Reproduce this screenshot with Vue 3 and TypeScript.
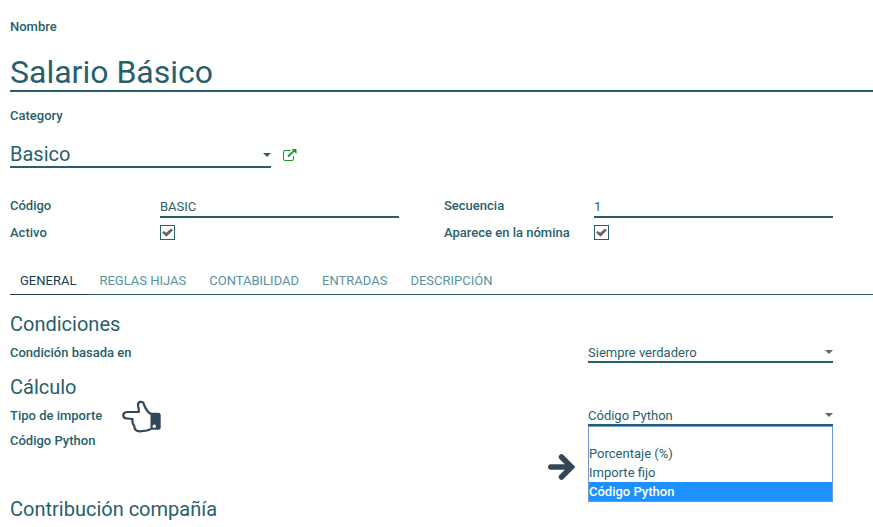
<script setup lang="ts">
import { ref } from 'vue'

const nombre = ref('Salario Básico')
const categoria = ref('Basico')
const codigo = ref('BASIC')
const secuencia = ref('1')
const activo = ref(true)
const apareceNomina = ref(true)
const condicion = ref('Siempre verdadero')
const tipoImporte = ref('Código Python')
const activeTab = ref('General')

const tabs: string[] = ['General', 'Reglas Hijas', 'Contabilidad', 'Entradas', 'Descripción']
const tipos: string[] = ['', 'Porcentaje (%)', 'Importe fijo', 'Código Python']
</script>

<template>
  <form class="sheet" @submit.prevent>
    <label class="label" for="nombre">Nombre</label>
    <input id="nombre" v-model="nombre" class="field title" type="text" />

    <label class="label" for="categoria">Category</label>
    <div class="category">
      <div class="picker category-picker">
        <select id="categoria" v-model="categoria" class="field">
          <option>Basico</option>
        </select>
      </div>
      <button class="open" type="button" aria-label="Abrir">
        <svg width="14" height="12" viewBox="0 0 14 12" fill="none" stroke="currentColor">
          <path d="M7.500 1.500H2Q0.500 1.500 0.500 3V10Q0.500 11.500 2 11.500H9Q10.500 11.500 10.500 10V7" />
          <path d="M5 7.500L11 1.800" stroke-width="1.800" />
          <path d="M8.500 0H13.500V5Z" fill="currentColor" stroke="none" />
        </svg>
      </button>
    </div>

    <div class="groups">
      <div class="group">
        <label class="label" for="codigo">Código</label>
        <input id="codigo" v-model="codigo" class="field" type="text" />
        <label class="label" for="activo">Activo</label>
        <input id="activo" v-model="activo" class="check" type="checkbox" />
      </div>
      <div class="group">
        <label class="label" for="secuencia">Secuencia</label>
        <input id="secuencia" v-model="secuencia" class="field" type="text" />
        <label class="label" for="nomina">Aparece en la nómina</label>
        <input id="nomina" v-model="apareceNomina" class="check" type="checkbox" />
      </div>
    </div>

    <div class="tabs" role="tablist">
      <button
        v-for="tab in tabs"
        :key="tab"
        type="button"
        role="tab"
        class="tab"
        :class="{ active: tab === activeTab }"
        :aria-selected="tab === activeTab"
        @click="activeTab = tab"
      >{{ tab }}</button>
    </div>

    <section class="section">
      <h2>Condiciones</h2>
      <div class="row">
        <label class="label" for="condicion">Condición basada en</label>
        <div class="picker gray">
          <select id="condicion" v-model="condicion" class="field">
            <option>Siempre verdadero</option>
          </select>
        </div>
      </div>
    </section>

    <section class="section calc">
      <h2>Cálculo</h2>
      <div class="row">
        <div class="pointed">
          <label class="label" for="tipo">Tipo de importe</label>
          <svg class="hand" width="40" height="34" viewBox="0 0 40 34" aria-hidden="true">
            <path
              d="M29 14C26 12.500 24 9.500 22.500 6L21.800 3.800C21 1 16.200 1 16 4.500C16 7 17 8.500 16.800 12H5C0 12.300 0 18.300 5 18.500L10.500 19C10 22.500 11 24.500 12.300 26C12.300 29.500 14.500 31.300 18 31.300L25 30.500L29 29"
              fill="#fff"
              stroke="currentColor"
              stroke-width="2.200"
              stroke-linejoin="round"
            />
            <path
              d="M28.500 12.700H36.500Q38.700 12.700 38.700 15V27.500Q38.700 29.800 36.500 29.800H28.500Z"
              fill="currentColor"
            />
            <circle cx="32.300" cy="26.300" r="1.700" fill="#fff" />
          </svg>
        </div>
        <div class="picker gray">
          <select id="tipo" v-model="tipoImporte" class="field">
            <option v-for="tipo in tipos" :key="tipo">{{ tipo }}</option>
          </select>
          <ul class="menu" role="listbox" aria-label="Tipo de importe">
            <li
              v-for="tipo in tipos"
              :key="tipo"
              role="option"
              :aria-selected="tipo === tipoImporte"
              :class="{ selected: tipo === tipoImporte }"
              @click="tipoImporte = tipo"
            >{{ tipo }}</li>
          </ul>
          <svg class="arrow" width="28" height="28" viewBox="0 0 28 28" aria-hidden="true">
            <path
              d="M2.800 14H23M13.500 4L23.500 14L13.500 24"
              fill="none"
              stroke="currentColor"
              stroke-width="5.500"
              stroke-linecap="round"
            />
          </svg>
        </div>
      </div>
      <span class="label">Código Python</span>
    </section>

    <section class="section">
      <h2>Contribución compañía</h2>
    </section>
  </form>
</template>

<style>
body {
  margin: 0;
  background: #fff;
}
</style>

<style scoped>
.sheet {
  --ink: #285f6b;
  --mark: #33475b;
  padding: 17px 0 0 10px;
  color: var(--ink);
  font: 13px/20px Roboto, sans-serif;
}

.label {
  display: block;
  font-weight: 500;
  line-height: 20px;
}

.field {
  display: block;
  box-sizing: border-box;
  width: 100%;
  height: 22px;
  padding: 0;
  border: 0;
  border-bottom: 2px solid var(--ink);
  border-radius: 0;
  outline: 0;
  background: transparent;
  color: inherit;
  font: inherit;
  appearance: none;
}

.title {
  height: 38px;
  margin: 17px 0 14px;
  font-size: 32px;
}

.category {
  display: flex;
  align-items: center;
  gap: 12px;
  margin-top: 16px;
}

.category-picker {
  width: 261px;
  font-size: 20px;
}

.category-picker .field {
  height: 26px;
}

.picker {
  position: relative;
}

.picker::after {
  content: '';
  position: absolute;
  top: 7px;
  right: 0;
  border: 4px solid transparent;
  border-top-color: var(--ink);
  border-bottom: 0;
  pointer-events: none;
}

.category-picker::after {
  top: 11px;
}

.gray::after {
  border-top-color: #666;
}

.open {
  display: flex;
  padding: 0;
  border: 0;
  background: none;
  color: #159a26;
}

.groups {
  display: grid;
  grid-template-columns: 1fr 1fr;
  gap: 45px;
  margin: 28px 40px 0 0;
}

.group {
  display: grid;
  grid-template-columns: 150px 1fr;
  grid-template-rows: 22px 20px;
  row-gap: 5px;
}

.check {
  display: grid;
  place-items: center;
  box-sizing: border-box;
  width: 15px;
  height: 15px;
  margin: 2px 0 0;
  border: 1px solid var(--ink);
  appearance: none;
}

.check:checked::before {
  content: '';
  width: 11px;
  height: 9px;
  background: #666;
  clip-path: polygon(0 50%, 16% 32%, 38% 54%, 82% 6%, 100% 24%, 40% 96%);
}

.tabs {
  display: flex;
  margin-top: 23px;
  border-bottom: 1px solid var(--ink);
}

.tab {
  height: 29px;
  margin-bottom: -1px;
  padding: 2px 13px 0 10px;
  border: 0;
  border-bottom: 1px solid transparent;
  background: none;
  color: #5a929d;
  font: inherit;
  text-transform: uppercase;
}

.tab.active {
  border-bottom-color: #1b3a4b;
  color: #1b3a4b;
}

.section {
  margin-top: 16px;
}

.section + .section {
  margin-top: 11px;
}

h2 {
  margin: 0;
  font-size: 20px;
  font-weight: 400;
  line-height: 26px;
}

.row {
  display: grid;
  grid-template-columns: 1fr 245px;
  margin: 6px 40px 0 0;
}

.row .field {
  height: 20px;
}

.calc {
  min-height: 111px;
}

.calc .row {
  margin-bottom: 5px;
}

.pointed {
  position: relative;
  justify-self: start;
}

.hand {
  position: absolute;
  top: -6px;
  left: calc(100% + 20px);
  color: var(--mark);
}

.menu {
  position: absolute;
  top: 100%;
  left: 0;
  right: 0;
  z-index: 1;
  margin: 0;
  padding: 0;
  border: 1px solid #6f98d8;
  background: #fff;
  line-height: 19px;
  list-style: none;
}

.menu li {
  min-height: 17px;
}

.menu .selected {
  background: #1e90ff;
  color: #fff;
  font-weight: 500;
}

.arrow {
  position: absolute;
  top: 47px;
  right: calc(100% + 12px);
  color: var(--mark);
}
</style>
